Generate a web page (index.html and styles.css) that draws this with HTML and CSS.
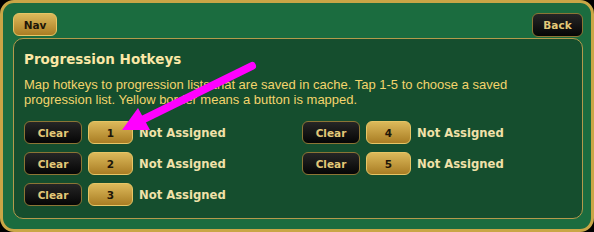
FILE: index.html
```html
<!DOCTYPE html>
<html lang="en">
<head>
  <meta charset="UTF-8">
  <meta name="viewport" content="width=device-width, initial-scale=1.0">
  <title>Progression Hotkeys</title>
  <link rel="stylesheet" href="styles.css">
</head>
<body>
  <div class="frame">
    <div class="top-bar">
      <button class="btn btn-gold nav-btn">Nav</button>
      <button class="btn btn-dark back-btn">Back</button>
    </div>
    <div class="panel">
      <h1>Progression Hotkeys</h1>
      <p class="help">Map hotkeys to progression lists that are saved in cache. Tap 1-5 to choose a saved progression list. Yellow border means a button is mapped.</p>
      <div class="hotkeys">
        <div class="hotkey">
          <button class="btn btn-dark clear-btn">Clear</button>
          <button class="btn btn-gold key-btn">1</button>
          <span class="status">Not Assigned</span>
        </div>
        <div class="hotkey">
          <button class="btn btn-dark clear-btn">Clear</button>
          <button class="btn btn-gold key-btn">2</button>
          <span class="status">Not Assigned</span>
        </div>
        <div class="hotkey">
          <button class="btn btn-dark clear-btn">Clear</button>
          <button class="btn btn-gold key-btn">3</button>
          <span class="status">Not Assigned</span>
        </div>
        <div class="hotkey">
          <button class="btn btn-dark clear-btn">Clear</button>
          <button class="btn btn-gold key-btn">4</button>
          <span class="status">Not Assigned</span>
        </div>
        <div class="hotkey">
          <button class="btn btn-dark clear-btn">Clear</button>
          <button class="btn btn-gold key-btn">5</button>
          <span class="status">Not Assigned</span>
        </div>
      </div>
    </div>

    <!-- annotation arrow -->
    <svg class="pointer" width="594" height="232" viewBox="0 0 594 232">
      <line x1="252" y1="66" x2="142" y2="120" stroke="#ff00ff" stroke-width="8" stroke-linecap="round"/>
      <polygon points="122,130 138,108 150,130" fill="#ff00ff"/>
    </svg>
  </div>
</body>
</html>
```

FILE: styles.css
```css
/* General Reset */
* {
  margin: 0;
  padding: 0;
  box-sizing: border-box;
}

body {
  background-color: #000;
  font-family: 'DejaVu Sans', Verdana, sans-serif;
}

/* Outer frame */
.frame {
  position: relative;
  width: 594px;
  height: 232px;
  display: flex;
  flex-direction: column;
  padding: 10px 8px 10px 10px;
  background-color: #1b6c3f;
  border: 3px solid #c9a646;
  border-radius: 14px;
}

.top-bar {
  display: flex;
  justify-content: space-between;
  margin-bottom: 1px;
}

/* Buttons */
.btn {
  height: 23px;
  font-family: 'DejaVu Sans', Verdana, sans-serif;
  font-weight: bold;
  font-size: 10.5px;
  border-radius: 6px;
  cursor: pointer;
}

.btn-gold {
  color: #1e1608;
  background: linear-gradient(#dcb95a, #a97d24);
  border: 1px solid #e7c565;
}

.btn-dark {
  color: #e3c978;
  background: linear-gradient(#262626, #050505);
  border: 1px solid #8c7535;
}

.nav-btn {
  width: 44px;
}

.back-btn {
  width: 51px;
  height: 24px;
}

/* Panel */
.panel {
  flex: 1;
  padding: 12px 10px 10px;
  background-color: #154e2e;
  border: 1px solid #b39a4c;
  border-radius: 10px;
}

.panel h1 {
  font-size: 13.5px;
  line-height: 16px;
  color: #fbe8a6;
  margin-bottom: 10px;
}

.help {
  font-family: 'Liberation Sans', Arial, sans-serif;
  font-size: 13px;
  line-height: 15px;
  color: #f3d46c;
  margin-bottom: 14px;
}

.hotkeys {
  display: grid;
  grid-template-columns: 1fr 1fr;
  grid-template-rows: repeat(3, auto);
  grid-auto-flow: column;
  column-gap: 8px;
  row-gap: 8px;
}

.hotkey {
  display: flex;
  align-items: center;
  gap: 6px;
}

.clear-btn {
  width: 58px;
}

.key-btn {
  width: 45px;
}

.status {
  font-weight: bold;
  font-size: 11.6px;
  color: #f0e1a9;
}

/* Annotation overlay */
.pointer {
  position: absolute;
  top: -3px;
  left: -3px;
  pointer-events: none;
}
```
